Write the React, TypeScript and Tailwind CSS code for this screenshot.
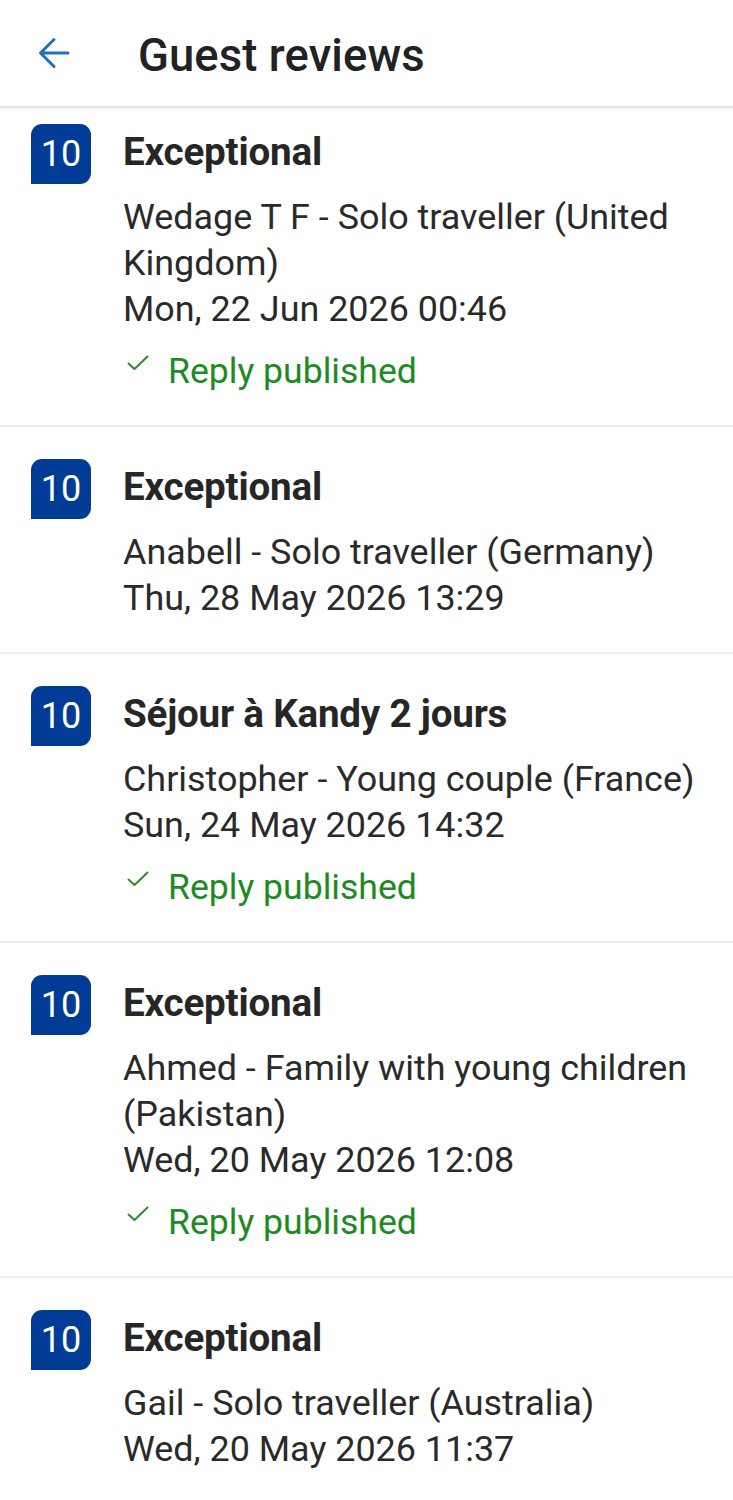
import React from "react";

type Review = {
  title: string;
  guest: string;
  date: string;
  replied: boolean;
};

const reviews: Review[] = [
  {
    title: "Exceptional",
    guest: "Wedage T F - Solo traveller (United Kingdom)",
    date: "Mon, 22 Jun 2026 00:46",
    replied: true,
  },
  {
    title: "Exceptional",
    guest: "Anabell - Solo traveller (Germany)",
    date: "Thu, 28 May 2026 13:29",
    replied: false,
  },
  {
    title: "Séjour à Kandy 2 jours",
    guest: "Christopher - Young couple (France)",
    date: "Sun, 24 May 2026 14:32",
    replied: true,
  },
  {
    title: "Exceptional",
    guest: "Ahmed - Family with young children (Pakistan)",
    date: "Wed, 20 May 2026 12:08",
    replied: true,
  },
  {
    title: "Exceptional",
    guest: "Gail - Solo traveller (Australia)",
    date: "Wed, 20 May 2026 11:37",
    replied: false,
  },
];

function BackArrow() {
  return (
    <svg width="34" height="34" viewBox="0 0 34 34" fill="none">
      <path
        d="M31 17H4M17 3.5L3.5 17L17 30.5"
        stroke="#1f6fbf"
        strokeWidth="3"
        strokeLinecap="round"
        strokeLinejoin="round"
      />
    </svg>
  );
}

function Check() {
  return (
    <svg width="22" height="16" viewBox="0 0 22 16" fill="none">
      <path
        d="M1.5 8.5L7.5 14L20.5 1.5"
        stroke="#2e8b2e"
        strokeWidth="2"
        strokeLinecap="round"
        strokeLinejoin="round"
      />
    </svg>
  );
}

function ReviewRow({ r, first }: { r: Review; first: boolean }) {
  return (
    <div
      className={`flex border-b-2 border-[#ececec] pl-[31px] pr-[12px] pb-[31px] ${
        first ? "pt-[16px]" : "pt-[32px]"
      }`}
    >
      <div className="w-[60px] h-[60px] shrink-0 bg-[#003b95] rounded-t-[11px] rounded-br-[11px] rounded-bl-none flex items-center justify-center text-white text-[36px] leading-none">
        10
      </div>
      <div className="ml-[32px] flex-1 min-w-0">
        <div className="text-[38.6px] leading-[56px] font-bold text-[#262626] tracking-[-0.2px]">
          {r.title}
        </div>
        <div className="mt-[14px] text-[35.9px] leading-[46px] text-[#2a2a2a]">
          <div>{r.guest}</div>
          <div>{r.date}</div>
        </div>
        {r.replied && (
          <div className="mt-[16px] flex items-center h-[46px]">
            <div className="w-[45px] shrink-0 pl-[4px] -mt-[16px]">
              <Check />
            </div>
            <span className="text-[35.6px] leading-[46px] text-[#1e8a22]">
              Reply published
            </span>
          </div>
        )}
      </div>
    </div>
  );
}

export default function App() {
  return (
    <div
      className="w-[733px] min-h-[1500px] bg-white overflow-hidden"
      style={{ fontFamily: "Roboto, 'Noto Sans', Arial, sans-serif" }}
    >
      <div className="h-[108px] flex items-center border-b-2 border-[#e4e4e4] shadow-[0_2px_4px_rgba(0,0,0,0.06)] relative">
        <div className="ml-[37px] w-[34px] flex items-center">
          <BackArrow />
        </div>
        <div className="ml-[67px] pt-[6px] text-[45.4px] font-medium text-[#222] leading-none tracking-[0.1px]">
          Guest reviews
        </div>
      </div>
      <div>
        {reviews.map((r, i) => (
          <ReviewRow key={i} r={r} first={i === 0} />
        ))}
      </div>
    </div>
  );
}
